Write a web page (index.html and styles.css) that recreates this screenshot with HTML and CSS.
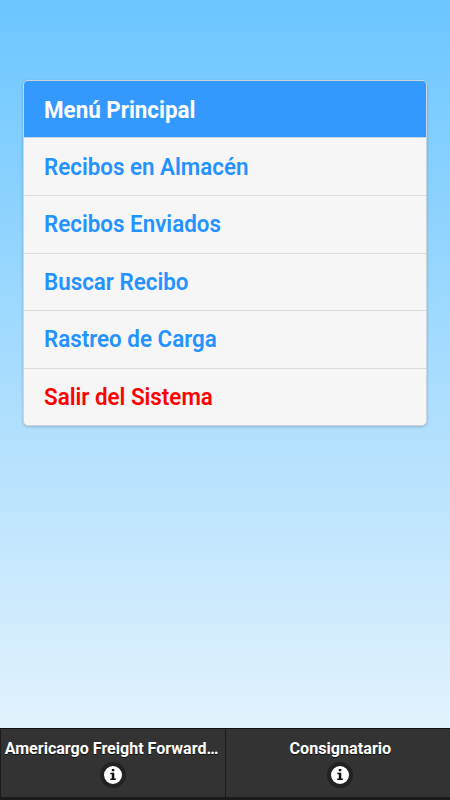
FILE: index.html
```html
<!DOCTYPE html>
<html lang="es">
<head>
<meta charset="utf-8">
<title>Menú Principal</title>
<link rel="stylesheet" href="styles.css">
</head>
<body>
<main class="content">
  <ul class="menu">
    <li class="menu-title"><span class="text">Menú Principal</span></li>
    <li><a class="text">Recibos en Almacén</a></li>
    <li class="raised"><a class="text">Recibos Enviados</a></li>
    <li><a class="text">Buscar Recibo</a></li>
    <li class="raised"><a class="text">Rastreo de Carga</a></li>
    <li><a class="text exit">Salir del Sistema</a></li>
  </ul>
</main>
<footer class="navbar">
  <div class="tab"><span class="label company">Americargo Freight Forward…</span>
    <span class="icon"><svg width="18" height="18" viewBox="0 0 18 18"><circle cx="9" cy="9" r="9" fill="#fff"/><path d="M7.8 3h2.5v2.2H7.8zM6.3 6.8h4v5.8h1.6V14H6.3v-1.4h1.5V8.2H6.3z" fill="#111"/></svg></span></div>
  <div class="tab"><span class="label">Consignatario</span>
    <span class="icon"><svg width="18" height="18" viewBox="0 0 18 18"><circle cx="9" cy="9" r="9" fill="#fff"/><path d="M7.8 3h2.5v2.2H7.8zM6.3 6.8h4v5.8h1.6V14H6.3v-1.4h1.5V8.2H6.3z" fill="#111"/></svg></span></div>
</footer>
</body>
</html>
```
FILE: styles.css
```css
* { box-sizing: border-box; }
body {
  margin: 0;
  height: 800px;
  display: flex;
  flex-direction: column;
  overflow: hidden;
  font-family: Roboto, sans-serif;
  background: linear-gradient(#6bc6ff, #e2f2fd 728px);
}
.content { flex: 1; padding: 80px 23px 0 23px; }
.menu {
  list-style: none;
  margin: 0;
  padding: 0;
  height: 346px;
  display: grid;
  grid-template-rows: 57px 58px 58px 57px 58px 56px;
  border: 1px solid #c9d6e0;
  border-radius: 5px;
  overflow: hidden;
  background: #f6f6f6;
  box-shadow: 0 1px 3px rgba(0, 0, 0, .2);
}
.menu li {
  display: flex;
  align-items: center;
  padding-left: 20px;
  border-bottom: 1px solid #dadada;
  color: #2492ff;
  font-size: 24px;
  font-weight: 600;
}
.menu li:last-child { border-bottom: 0; }
.menu .raised { padding-bottom: 1px; }
.menu .menu-title { background: #3399ff; color: #fff; font-weight: 700; padding-top: 2px; border-bottom-color: #c9d6e0; }
.text { display: inline-block; transform: scaleX(.932); transform-origin: left; }
.menu .exit { color: #f00; }
.navbar {
  height: 72px;
  display: grid;
  grid-template-columns: 225px 225px;
  border-top: 1px solid #111;
  border-bottom: 3px solid #1b1b1b;
  background: #333;
  color: #fff;
}
.tab {
  display: flex;
  flex-direction: column;
  align-items: center;
  min-width: 0;
  padding-top: 10px;
  border-left: 1px solid #1b1b1b;
}
.tab + .tab { padding-left: 4px; }
.label {
  white-space: nowrap;
  font-size: 16px;
  line-height: 19px;
  font-weight: 700;
  text-shadow: 0 1px 0 #111;
  transform: scaleX(1.01);
}
.company { transform: translateX(-1px) scaleX(1.003); }
.icon {
  display: flex;
  margin-top: 4px;
  padding: 4px;
  border-radius: 50%;
  background: #222;
}
```
